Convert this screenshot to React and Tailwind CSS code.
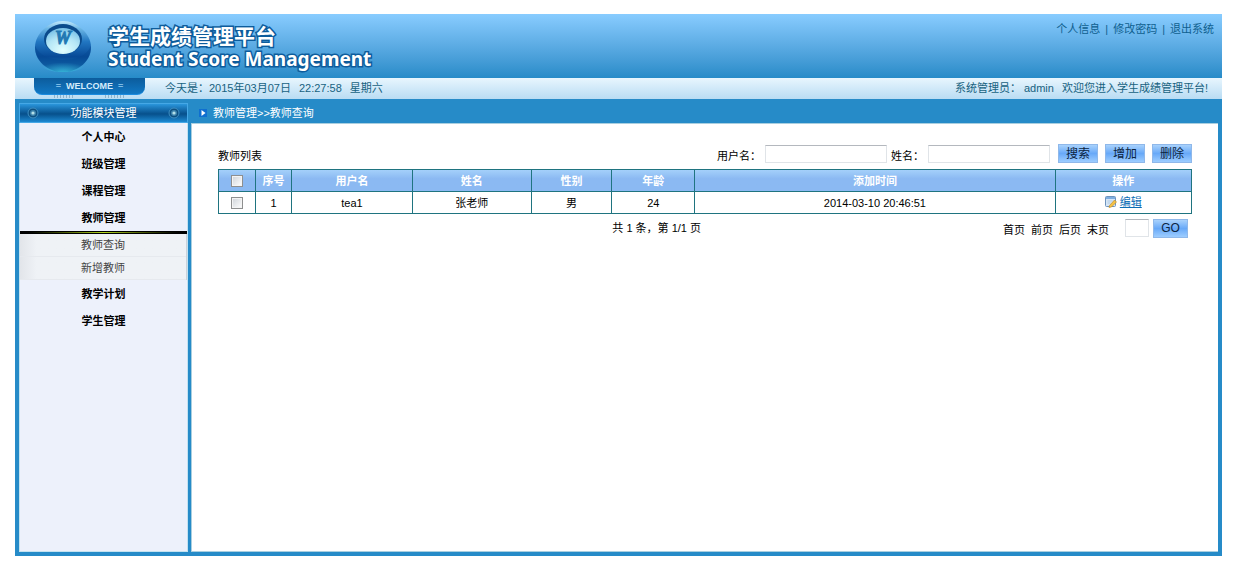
import React, { useState } from 'react';

const menus = [
  { name: '个人中心' },
  { name: '班级管理' },
  { name: '课程管理' },
  { name: '教师管理', children: ['教师查询', '新增教师'] },
  { name: '教学计划' },
  { name: '学生管理' },
];

const teachers = [
  { id: 1, username: 'tea1', name: '张老师', sex: '男', age: 24, addTime: '2014-03-10 20:46:51' },
];

const columns = [
  { title: '序号', width: 'w-[3.7%]' },
  { title: '用户名', width: 'w-[12.4%]' },
  { title: '姓名', width: 'w-[12.2%]' },
  { title: '性别', width: 'w-[8.3%]' },
  { title: '年龄', width: 'w-[8.5%]' },
  { title: '添加时间', width: 'w-[37%]' },
  { title: '操作', width: 'w-[14%]' },
];

const Logo = () => (
  <svg className="w-[58px] h-[52px] shrink-0" viewBox="0 0 58 52" aria-hidden="true">
    <defs>
      <linearGradient id="ball" x1="0" y1="0" x2="0" y2="1">
        <stop offset="0" stopColor="#c4e9fb" />
        <stop offset="0.15" stopColor="#6bb5e4" />
        <stop offset="0.4" stopColor="#2277c2" />
        <stop offset="0.7" stopColor="#074a97" />
        <stop offset="1" stopColor="#1f86bd" />
      </linearGradient>
      <radialGradient id="face" cx="0.5" cy="0.85" r="0.8">
        <stop offset="0" stopColor="#e2ffff" />
        <stop offset="0.6" stopColor="#b4e6f6" />
        <stop offset="1" stopColor="#7cc3e8" />
      </radialGradient>
      <radialGradient id="glow" cx="0.5" cy="1" r="0.6">
        <stop offset="0" stopColor="#3cc0e0" stopOpacity="0.8" />
        <stop offset="1" stopColor="#3cc0e0" stopOpacity="0" />
      </radialGradient>
    </defs>
    <path d="M29 0C43 0 57 13 57 26C57 40 44 51 29 51S1 40 1 26C1 13 15 0 29 0Z" fill="url(#ball)" />
    <path d="M1 25C6 36 17 39 29 39S52 36 57 25C58 40 44 51 29 51S0 40 1 25Z" fill="#064a93" opacity="0.5" />
    <ellipse cx="29" cy="43" rx="22" ry="8" fill="url(#glow)" />
    <ellipse cx="29" cy="18" rx="19" ry="15" fill="#0b4b8c" />
    <ellipse cx="29" cy="20" rx="17" ry="13" fill="url(#face)" />
    <text
      x="29"
      y="23"
      textAnchor="middle"
      fontFamily="Liberation Serif, serif"
      fontSize="18"
      fontWeight="bold"
      fontStyle="italic"
      fill="#2379b4"
      stroke="#2379b4"
      strokeWidth="1"
    >
      W
    </text>
  </svg>
);

const Rivet = () => (
  <svg className="w-3 h-3" viewBox="0 0 12 12" aria-hidden="true">
    <circle cx="6" cy="6" r="5" fill="#0d4f80" stroke="#3f90c4" />
    <circle cx="6" cy="6" r="3" fill="#3d83ac" />
    <circle cx="6" cy="6" r="1.6" fill="#b4dfe8" />
  </svg>
);

const EditIcon = () => (
  <svg className="w-3 h-3" viewBox="0 0 12 12" aria-hidden="true">
    <rect x="0.5" y="0.5" width="10" height="10" rx="1" fill="#d5e6f7" stroke="#6d93bd" />
    <rect x="1" y="1" width="9" height="2" fill="#7eaee0" />
    <path d="M2.5 5h5M2.5 7h3" stroke="#a9c3dc" strokeWidth="0.8" />
    <path d="M4.5 9.5L9.5 4L11.5 6L6.5 11L4 11.5Z" fill="#f5c244" stroke="#b98524" strokeWidth="0.6" />
  </svg>
);

const Button = ({ children, className = 'w-10', ...rest }) => (
  <button
    type="button"
    className={`h-[19px] border border-[#8fb8ea] bg-linear-to-b from-[#a9d2fc] via-[#68a9f8] via-50% to-[#9dcdff] text-[12px] leading-4 text-[#0b2440] cursor-pointer ${className}`}
    {...rest}
  >
    {children}
  </button>
);

const inputClass =
  'h-[18px] px-1 bg-white border border-[#e0e4e8] border-t-[#b4b8be] outline-none focus:border-[#68a9f8]';

const checkboxClass =
  'block mx-auto w-3 h-3 appearance-none border border-[#8e8f8f] bg-linear-to-br from-[#cfd3d8] to-white shadow-[inset_0_0_0_1px_#f4f4f4] checked:from-[#2b6cb0] checked:to-[#2b6cb0]';

const Header = () => (
  <header>
    <div className="flex justify-between h-16 pl-[19px] pr-2 bg-linear-to-b from-[#88ccff] to-[#268bc8]">
      <div className="flex gap-4 pt-[7px]">
        <Logo />
        <h1 className="pt-1 font-bold text-white [-webkit-text-stroke:3px_#0d5c9c] [paint-order:stroke]">
          <span className="block text-[21px] leading-[23px]">学生成绩管理平台</span>
          <span className="block font-['Noto_Sans',sans-serif] text-[19px] leading-[22px]">Student Score Management</span>
        </h1>
      </div>
      <nav className="flex gap-[5px] pt-[7px] h-6 leading-4 text-[#0f5f8f]">
        <a href="#info">个人信息</a>
        <span>|</span>
        <a href="#password">修改密码</a>
        <span>|</span>
        <a href="#logout">退出系统</a>
      </nav>
    </div>

    <div className="flex items-start h-[21px] pl-[19px] pr-[14px] bg-linear-to-b from-[#e8f6fe] to-[#b9dcf3] text-[#17627f] leading-5">
      <div className="w-[111px] mr-5">
        <div className="flex items-center justify-center gap-[5px] h-[17px] rounded-b-lg border-b border-[#1c8ce0] bg-linear-to-b from-[#0c5c9c] to-[#1178c4] font-bold text-[9px] text-[#d5ecfb]">
          <span className="text-[#7dbce6]">=</span>
          <span>WELCOME</span>
          <span className="text-[#7dbce6]">=</span>
        </div>
        <div className="flex justify-between px-5 h-[3px]">
          <div className="w-5 bg-[repeating-linear-gradient(90deg,#8fb4cc_0_1px,transparent_1px_3px)]" />
          <div className="w-5 bg-[repeating-linear-gradient(90deg,#8fb4cc_0_1px,transparent_1px_3px)]" />
        </div>
      </div>
      <p className="flex flex-1 gap-2">
        <span>今天是：2015年03月07日</span>
        <span>22:27:58</span>
        <span>星期六</span>
      </p>
      <p className="flex gap-2">
        <span>系统管理员： admin</span>
        <span>欢迎您进入学生成绩管理平台!</span>
      </p>
    </div>
  </header>
);

const Sidebar = () => {
  const [open, setOpen] = useState('教师管理');

  return (
    <aside className="flex flex-col w-[169px] shrink-0 pt-1">
      <h2 className="flex items-center justify-between h-5 px-[7px] border border-[#45a8e6] bg-linear-to-b from-[#2a96dc] via-[#07508c] via-55% to-[#1d8ad2] text-white">
        <Rivet />
        <span>功能模块管理</span>
        <Rivet />
      </h2>
      <nav className="flex-1 bg-[#edf1fb] border-x border-b border-[#c3e2f0]">
        {menus.map((menu) => (
          <div key={menu.name}>
            <button
              type="button"
              onClick={() => setOpen(menu.name)}
              className="block w-full h-[27px] font-bold text-black cursor-pointer"
            >
              {menu.name}
            </button>
            {menu.children && open === menu.name && (
              <div>
                <div className="h-[3px] border-y border-black bg-linear-to-r from-black via-[#b6dc1e] to-black bg-origin-border" />
                <ul className="border-r border-[#ccd2da] bg-linear-to-r from-[#e2e5ea] via-[#eff2f6] via-10% to-[#eff2f6]">
                  {menu.children.map((child) => (
                    <li key={child} className="h-[23px] border-b border-[#e6e9ee] text-center leading-[23px]">
                      <a href="#teacher" className="text-[#444]">{child}</a>
                    </li>
                  ))}
                </ul>
              </div>
            )}
          </div>
        ))}
      </nav>
    </aside>
  );
};

const TeacherList = () => {
  const [selected, setSelected] = useState([]);
  const allSelected = selected.length === teachers.length;

  const toggle = (id) => {
    setSelected(selected.includes(id) ? selected.filter((s) => s !== id) : [...selected, id]);
  };

  return (
    <section className="flex-1 px-[26px] pt-5 bg-white border-l border-t border-b border-[#a9cfe0] text-black">
      {/* Search bar */}
      <div className="flex items-center justify-between h-[19px] mb-[6px]">
        <h3 className="pt-1">教师列表</h3>
        <form className="flex items-center">
          <label htmlFor="username" className="pt-1 mr-1">用户名：</label>
          <input id="username" type="text" className={`w-[122px] mr-1 ${inputClass}`} />
          <label htmlFor="name" className="pt-1 mr-1">姓名：</label>
          <input id="name" type="text" className={`w-[122px] mr-2 ${inputClass}`} />
          <div className="flex gap-[7px]">
            <Button>搜索</Button>
            <Button>增加</Button>
            <Button>删除</Button>
          </div>
        </form>
      </div>

      <table className="w-full table-fixed border-collapse text-center">
        <thead>
          <tr className="h-[22px] bg-linear-to-b from-[#a4d0fa] via-[#8bb9f2] via-40% to-[#8bb9f2] text-white">
            <th className="w-[3.8%] border border-[#1f7480]">
              <input
                type="checkbox"
                aria-label="全选"
                checked={allSelected}
                onChange={() => setSelected(allSelected ? [] : teachers.map((t) => t.id))}
                className={checkboxClass}
              />
            </th>
            {columns.map((col) => (
              <th key={col.title} className={`border border-[#1f7480] ${col.width}`}>
                {col.title}
              </th>
            ))}
          </tr>
        </thead>
        <tbody>
          {teachers.map((t) => (
            <tr key={t.id} className="h-[22px]">
              <td className="border border-[#1f7480]">
                <input
                  type="checkbox"
                  aria-label={t.name}
                  checked={selected.includes(t.id)}
                  onChange={() => toggle(t.id)}
                  className={checkboxClass}
                />
              </td>
              <td className="border border-[#1f7480]">{t.id}</td>
              <td className="border border-[#1f7480]">{t.username}</td>
              <td className="border border-[#1f7480]">{t.name}</td>
              <td className="border border-[#1f7480]">{t.sex}</td>
              <td className="border border-[#1f7480]">{t.age}</td>
              <td className="border border-[#1f7480]">{t.addTime}</td>
              <td className="border border-[#1f7480]">
                <a href="#edit" className="inline-flex items-center gap-[3px] text-[#0b6db5]">
                  <EditIcon />
                  <span className="underline">编辑</span>
                </a>
              </td>
            </tr>
          ))}
        </tbody>
      </table>

      {/* Pagination */}
      <div className="grid grid-cols-2 items-center pt-1">
        <p className="pr-1 text-right">共 1 条，第 1/1 页</p>
        <form className="flex items-center justify-end pr-1">
          <div className="flex gap-[6px] pt-1 mr-4">
            <a href="#first">首页</a>
            <a href="#prev">前页</a>
            <a href="#next">后页</a>
            <a href="#last">末页</a>
          </div>
          <input type="text" aria-label="页码" className={`w-6 mr-1 ${inputClass}`} />
          <Button className="w-[35px]">GO</Button>
        </form>
      </div>
    </section>
  );
};

const App = () => {
  return (
    <div className="min-h-screen flex flex-col px-[15px] pt-[14px] pb-[19px] bg-white font-['Liberation_Sans','Noto_Sans_CJK_SC',sans-serif] text-[11px] leading-4">
      <Header />
      <div className="flex flex-1 gap-[3px] px-1 pb-1 bg-[#268bc8]">
        <Sidebar />
        <main className="flex flex-col flex-1 min-w-0">
          <div className="flex items-center gap-[6px] h-6 pt-1 pl-2 text-white">
            <svg className="w-2 h-2" viewBox="0 0 8 8" aria-hidden="true">
              <rect width="8" height="8" fill="#0f6fd0" />
              <path d="M2.5 1L6.5 4L2.5 7Z" fill="#fff" />
            </svg>
            <span>教师管理&gt;&gt;教师查询</span>
          </div>
          <TeacherList />
        </main>
      </div>
    </div>
  );
};

export default App;
